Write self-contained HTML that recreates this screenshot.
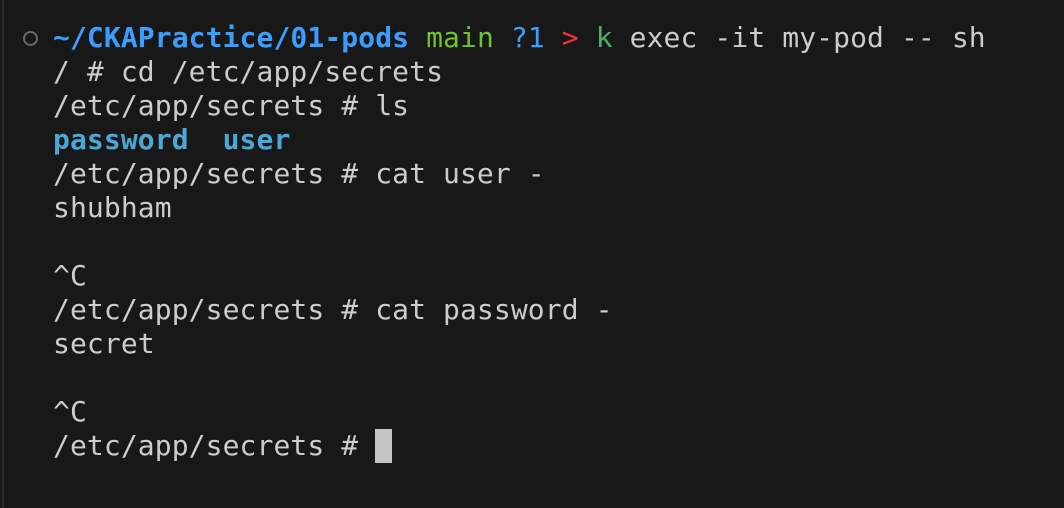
<!DOCTYPE html>
<html><head><meta charset="utf-8"><style>
html,body{margin:0;padding:0;background:#181818;width:1064px;height:508px;overflow:hidden}
body{position:relative}
.bar{position:absolute;left:2px;top:0;width:2px;height:508px;background:#2b2b2b}
.t{position:absolute;left:53px;top:21px;font-family:"DejaVu Sans Mono","Liberation Mono",monospace;font-size:28px;line-height:34px;letter-spacing:0.1px;color:#cccccc;white-space:pre;margin:0}
.b{color:#3b9eff;font-weight:bold}
.g{color:#6fc32f}
.q{color:#3b9eff}
.r{color:#f0382c}
.k{color:#4fae6a}
.d{color:#4aa8d8;font-weight:bold}
.circ{position:absolute;left:23px;top:31px;width:11px;height:11px;border:2.5px solid #6a6a6a;border-radius:50%}
.cur{position:absolute;left:375px;top:429px;width:17px;height:34px;background:#c4c4c4}
</style></head><body>
<div class="bar"></div>
<div class="circ"></div>
<pre class="t"><span class="b">~/CKAPractice/01-pods</span> <span class="g">main</span> <span class="q">?1</span> <span class="r">&gt;</span> <span class="k">k</span> exec -it my-pod -- sh
/ # cd /etc/app/secrets
/etc/app/secrets # ls
<span class="d">password</span>  <span class="d">user</span>
/etc/app/secrets # cat user -
shubham

^C
/etc/app/secrets # cat password -
secret

^C
/etc/app/secrets # </pre>
<div class="cur"></div>
</body></html>
